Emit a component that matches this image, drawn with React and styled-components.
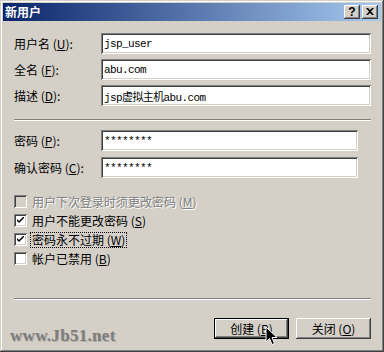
import React from "react";
import styled, { createGlobalStyle } from "styled-components";

const GlobalStyle = createGlobalStyle`
  html, body {
    margin: 0;
    padding: 0;
    background: #d4d0c8;
  }
  body {
    font-family: "Noto Sans CJK SC", "Liberation Sans", sans-serif;
    font-size: 12px;
    color: #000;
  }
`;

const Window = styled.div`
  position: relative;
  width: 384px;
  height: 352px;
  box-sizing: border-box;
  padding: 3px;
  background: #d4d0c8;
  box-shadow: inset -1px -1px #404040, inset 1px 1px #d4d0c8,
    inset -2px -2px #808080, inset 2px 2px #ffffff;
  display: flex;
  flex-direction: column;
  overflow: hidden;
`;

const TitleBar = styled.div`
  height: 18px;
  display: flex;
  align-items: center;
  padding: 0 3px 0 2px;
  background: linear-gradient(to right, #0a246a, #a6caf0);
`;

const Title = styled.span`
  flex: 1;
  color: #fff;
  font-weight: bold;
  font-size: 12px;
  line-height: 1;
`;

const TitleButtons = styled.div`
  display: flex;
  gap: 2px;
`;

const TitleButton = styled.div`
  width: 16px;
  height: 14px;
  box-sizing: border-box;
  display: flex;
  align-items: center;
  justify-content: center;
  background: #d4d0c8;
  box-shadow: inset -1px -1px #404040, inset 1px 1px #ffffff,
    inset -2px -2px #808080, inset 2px 2px #d4d0c8;
  font-family: "Liberation Sans", sans-serif;
  font-weight: bold;
  font-size: 12px;
  line-height: 1;
  padding-bottom: 1px;
`;

const Body = styled.div`
  flex: 1;
  display: flex;
  flex-direction: column;
  padding: 12px 10px 0 11px;
`;

const FieldGroup = styled.div`
  display: flex;
  flex-direction: column;
  gap: ${(p) => p.$gap}px;
  margin-top: ${(p) => p.$top}px;
`;

const Row = styled.div`
  display: flex;
  align-items: center;
  height: 21px;
`;

const Label = styled.label`
  width: 87px;
  line-height: 1;
  white-space: pre;
`;

const TextBox = styled.input`
  width: ${(p) => p.$width}px;
  height: 21px;
  box-sizing: border-box;
  border: none;
  outline: none;
  margin: 0;
  padding: 0 3px;
  background: #fff;
  box-shadow: inset 1px 1px #808080, inset -1px -1px #ffffff,
    inset 2px 2px #404040, inset -2px -2px #d4d0c8;
  font-family: "Liberation Mono", "Noto Sans CJK SC", monospace;
  font-size: 11px;
  letter-spacing: -0.6px;
  color: #000;
`;

const Separator = styled.div`
  height: 0;
  border-top: 1px solid #808080;
  border-bottom: 1px solid #ffffff;
  margin-top: ${(p) => p.$top}px;
`;

const CheckList = styled.div`
  display: flex;
  flex-direction: column;
  margin-top: 14px;
`;

const CheckRow = styled.div`
  display: flex;
  align-items: center;
  gap: 3px;
  height: 19px;
  color: ${(p) => (p.$disabled ? "#808080" : "#000")};
  text-shadow: ${(p) => (p.$disabled ? "1px 1px 0 #ffffff" : "none")};
`;

const Box = styled.div`
  width: 13px;
  height: 13px;
  box-sizing: border-box;
  display: flex;
  align-items: center;
  justify-content: center;
  background: ${(p) => (p.$disabled ? "#d4d0c8" : "#ffffff")};
  box-shadow: inset 1px 1px #808080, inset -1px -1px #ffffff,
    inset 2px 2px #404040, inset -2px -2px #d4d0c8;
`;

const CheckText = styled.span`
  line-height: 1;
  padding: 1px 1px;
  white-space: pre;
  border: 1px dotted ${(p) => (p.$focused ? "#000" : "transparent")};
`;

const Mark = styled.u`
  text-decoration: underline;
  text-underline-offset: 1px;
`;

const ButtonRow = styled.div`
  display: flex;
  justify-content: flex-end;
  gap: 7px;
  margin-top: 18px;
`;

const Button = styled.div`
  width: 75px;
  height: 21px;
  box-sizing: border-box;
  display: flex;
  align-items: center;
  justify-content: center;
  white-space: pre;
  border: ${(p) => (p.$default ? "1px solid #000" : "none")};
  background: #d4d0c8;
  box-shadow: inset -1px -1px #404040, inset 1px 1px #ffffff,
    inset -2px -2px #808080, inset 2px 2px #d4d0c8;
  line-height: 1;
`;

const Watermark = styled.div`
  position: absolute;
  left: 10px;
  top: 326px;
  font-family: "Liberation Serif", serif;
  font-size: 17px;
  font-weight: bold;
  color: #7c7c7c;
  text-shadow: 1px 1px 0 #b4b0a8;
  letter-spacing: 0.3px;
`;

const Cursor = styled.svg`
  position: absolute;
  left: 265px;
  top: 326px;
`;

const CheckIcon = () => (
  <svg width="7" height="7" viewBox="0 0 7 7">
    <path d="M0 2 L0 4 L2 6 L7 1 L7 -1 L2 4 Z" fill="#000" />
  </svg>
);

const CloseIcon = () => (
  <svg width="8" height="7" viewBox="0 0 8 7">
    <path d="M0 0 L2 0 L4 2 L6 0 L8 0 L5 3.5 L8 7 L6 7 L4 5 L2 7 L0 7 L3 3.5 Z" fill="#000" />
  </svg>
);

const fields = [
  { label: "用户名", key: "U", value: "jsp_user" },
  { label: "全名", key: "F", value: "abu.com" },
  { label: "描述", key: "D", value: "jsp虚拟主机abu.com" },
];

const passwords = [
  { label: "密码", key: "P" },
  { label: "确认密码", key: "C" },
];

const options = [
  { text: "用户下次登录时须更改密码", key: "M", disabled: true },
  { text: "用户不能更改密码", key: "S", checked: true },
  { text: "密码永不过期", key: "W", checked: true, focused: true },
  { text: "帐户已禁用", key: "B" },
];

export default function App() {
  return (
    <>
      <GlobalStyle />
      <Window>
        <TitleBar>
          <Title>新用户</Title>
          <TitleButtons>
            <TitleButton>?</TitleButton>
            <TitleButton>
              <CloseIcon />
            </TitleButton>
          </TitleButtons>
        </TitleBar>

        <Body>
          <FieldGroup $gap={5} $top={0}>
            {fields.map((f) => (
              <Row key={f.key}>
                <Label>
                  {f.label} (<Mark>{f.key}</Mark>):
                </Label>
                <TextBox $width={270} readOnly value={f.value} />
              </Row>
            ))}
          </FieldGroup>

          <Separator $top={13} />

          <FieldGroup $gap={6} $top={9}>
            {passwords.map((f) => (
              <Row key={f.key}>
                <Label>
                  {f.label} (<Mark>{f.key}</Mark>):
                </Label>
                <TextBox $width={257} readOnly value="********" />
              </Row>
            ))}
          </FieldGroup>

          <CheckList>
            {options.map((o) => (
              <CheckRow key={o.key} $disabled={o.disabled}>
                <Box $disabled={o.disabled}>{o.checked && <CheckIcon />}</Box>
                <CheckText $focused={o.focused}>
                  {o.text} (<Mark>{o.key}</Mark>)
                </CheckText>
              </CheckRow>
            ))}
          </CheckList>

          <Separator $top={30} />

          <ButtonRow>
            <Button $default>
              创建 (<Mark>B</Mark>)
            </Button>
            <Button>
              关闭 (<Mark>O</Mark>)
            </Button>
          </ButtonRow>
        </Body>

        <Watermark>www.Jb51.net</Watermark>

        <Cursor width="13" height="21" viewBox="0 0 13 21">
          <path
            d="M1 1 L1 16 L4.5 12.5 L7 18.5 L9.5 17.5 L7 11.5 L12 11.5 Z"
            fill="#000"
            stroke="#fff"
            strokeWidth="1"
          />
        </Cursor>
      </Window>
    </>
  );
}
